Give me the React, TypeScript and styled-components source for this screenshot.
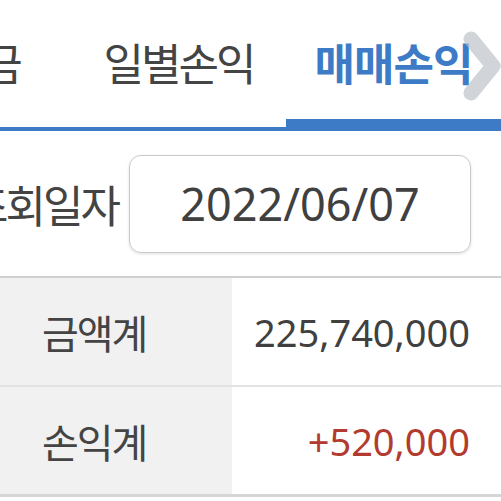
import React from "react";
import styled, { createGlobalStyle } from "styled-components";

const Global = createGlobalStyle`
  html, body { margin: 0; padding: 0; background: #fff; }
  body { font-family: "Noto Sans", "Noto Sans CJK KR", sans-serif; color: #444; }
`;

const Page = styled.div`
  width: 501px;
  height: 501px;
  overflow: hidden;
  position: relative;
  background: #fff;
`;

const TabBar = styled.div`
  position: relative;
  height: 131px;
  overflow: hidden;
  border-bottom: 4px solid #3e7bc6;
  box-sizing: border-box;
`;

const TabStrip = styled.div`
  display: flex;
  height: 100%;
  margin-left: -144px;
`;

const Tab = styled.div<{ $active?: boolean }>`
  flex: 0 0 215px;
  display: flex;
  align-items: center;
  justify-content: center;
  position: relative;
  font-family: "Noto Sans CJK KR", sans-serif;
  font-size: 44px;
  letter-spacing: ${(p) => (p.$active ? "-1px" : "-3px")};
  font-weight: ${(p) => (p.$active ? 700 : 400)};
  color: ${(p) => (p.$active ? "#3e7bc6" : "#444")};
  padding-bottom: 4px;
  box-sizing: border-box;
  &::after {
    content: "";
    display: ${(p) => (p.$active ? "block" : "none")};
    position: absolute;
    left: 0;
    right: -20px;
    bottom: 0;
    height: 8px;
    background: #3e7bc6;
  }
`;

const Chevron = styled.svg`
  position: absolute;
  left: 458px;
  top: 26px;
  width: 43px;
  height: 80px;
`;

const QueryRow = styled.div`
  height: 145px;
  display: flex;
  align-items: center;
  justify-content: flex-end;
  gap: 11px;
  padding: 0 30px 0 0;
  overflow: hidden;
`;

const QueryLabel = styled.div`
  flex: 0 0 auto;
  font-family: "Noto Sans CJK KR", sans-serif;
  font-size: 44px;
  letter-spacing: -3px;
  color: #444;
  white-space: nowrap;
`;

const DateBox = styled.div`
  flex: 0 0 342px;
  height: 98px;
  box-sizing: border-box;
  border: 1.5px solid #c9c9c9;
  border-radius: 12px;
  box-shadow: 0 1px 3px rgba(0, 0, 0, 0.12);
  display: flex;
  align-items: center;
  justify-content: center;
  font-size: 45px;
  color: #404040;
`;

const Table = styled.div`
  border-top: 2px solid #cfcfcf;
  border-bottom: 3px solid #d6d6d6;
`;

const Row = styled.div<{ $last?: boolean }>`
  display: grid;
  grid-template-columns: 232px 1fr;
  height: 107px;
  border-bottom: ${(p) => (p.$last ? "none" : "2px solid #e3e3e3")};
`;

const HeadCell = styled.div`
  background: #f1f1f1;
  display: flex;
  align-items: center;
  padding-left: 42px;
  font-family: "Noto Sans CJK KR", sans-serif;
  font-size: 40px;
  letter-spacing: -2px;
  color: #444;
`;

const ValueCell = styled.div<{ $tone?: "up" }>`
  display: flex;
  align-items: center;
  justify-content: flex-end;
  padding-right: 31px;
  font-size: 38px;
  color: ${(p) => (p.$tone === "up" ? "#b23a2f" : "#404040")};
`;

export default function App() {
  return (
    <Page>
      <Global />
      <TabBar>
        <TabStrip>
          <Tab>예수금</Tab>
          <Tab>일별손익</Tab>
          <Tab $active>매매손익</Tab>
        </TabStrip>
        <Chevron viewBox="0 0 43 80">
          <path
            d="M13 13 L35 40 L13 67"
            fill="none"
            stroke="rgba(185,189,195,0.65)"
            strokeWidth="15"
            strokeLinecap="round"
            strokeLinejoin="round"
          />
        </Chevron>
      </TabBar>
      <QueryRow>
        <QueryLabel>조회일자</QueryLabel>
        <DateBox>2022/06/07</DateBox>
      </QueryRow>
      <Table>
        <Row>
          <HeadCell>금액계</HeadCell>
          <ValueCell>225,740,000</ValueCell>
        </Row>
        <Row $last>
          <HeadCell>손익계</HeadCell>
          <ValueCell $tone="up">+520,000</ValueCell>
        </Row>
      </Table>
    </Page>
  );
}
